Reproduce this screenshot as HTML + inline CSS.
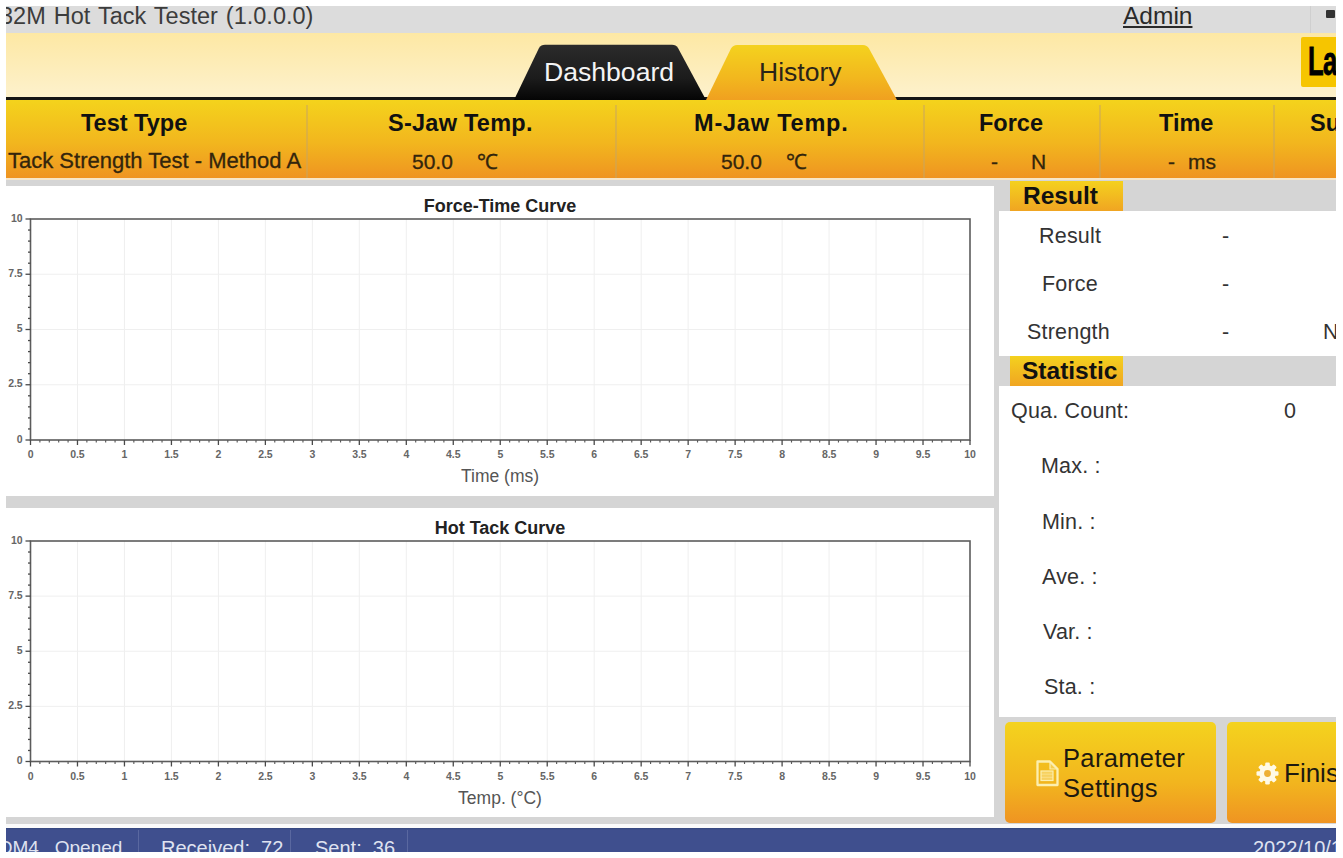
<!DOCTYPE html>
<html><head><meta charset="utf-8">
<style>
html,body{margin:0;padding:0;}
body{width:1343px;height:858px;position:relative;overflow:hidden;background:#fff;font-family:"Liberation Sans",sans-serif;}
#wrap{position:absolute;left:0;top:0;width:1343px;height:858px;clip-path:inset(6px 7px 6px 6px);}
.a{position:absolute;}
.t{position:absolute;white-space:pre;line-height:1;}
.hd{position:absolute;white-space:pre;line-height:1;font-weight:bold;color:#111;font-size:23.5px;}
.vl{position:absolute;white-space:pre;line-height:1;color:#33250c;font-size:21px;-webkit-text-stroke:0.3px #33250c;}
.vl2{font-size:22px;}
.sep{position:absolute;top:105px;width:2px;height:73px;background:rgba(200,165,95,0.5);}
.rl{position:absolute;white-space:pre;line-height:1;color:#333;font-size:21.5px;letter-spacing:0.2px;}
svg text.tk{font-family:"Liberation Sans",sans-serif;font-size:10.5px;font-weight:bold;fill:#666;letter-spacing:-0.1px;}
svg text.ct{font-family:"Liberation Sans",sans-serif;font-size:18px;font-weight:bold;fill:#222;}
svg text.xl{font-family:"Liberation Sans",sans-serif;font-size:17.5px;fill:#555;}
</style></head><body>
<div id="wrap">
  <!-- title bar -->
  <div class="a" style="left:0;top:0;width:1343px;height:33px;background:#dcdcdc;"></div>
  <div class="t" style="left:0px;top:4.5px;font-size:23.5px;color:#3c3c3c;word-spacing:1.5px;">32M Hot Tack Tester (1.0.0.0)</div>
  <div class="t" style="left:1123px;top:4px;font-size:24.5px;color:#2a2a2a;text-decoration:underline;">Admin</div>
  <div class="a" style="left:1310px;top:6px;width:1px;height:27px;background:#cfcfcf;"></div>
  <div class="a" style="left:1326px;top:10px;width:9px;height:8px;background:#333;border-radius:1px;"></div>
  <!-- yellow header -->
  <div class="a" style="left:0;top:33px;width:1343px;height:64px;background:linear-gradient(#fde8a4,#fdf1cc);"></div>
  <!-- logo -->
  <div class="a" style="left:1301px;top:37px;width:42px;height:50px;background:#f6c500;border-radius:2px;"></div>
  <div class="t" style="left:1308px;top:41px;font-size:40px;font-weight:bold;color:#000;transform:scaleX(0.64);transform-origin:left top;letter-spacing:-1px;-webkit-text-stroke:0.8px #000;">La</div>
  <!-- black line -->
  <div class="a" style="left:0;top:97px;width:1343px;height:3px;background:#151515;"></div>
  <!-- tabs -->
  <svg class="a" style="left:500px;top:40px;" width="420" height="62">
    <defs>
      <linearGradient id="gd" x1="0" y1="0" x2="0" y2="1">
        <stop offset="0" stop-color="#2b2b2b"/><stop offset="0.6" stop-color="#1c1c1c"/><stop offset="1" stop-color="#050505"/>
      </linearGradient>
      <linearGradient id="gh" x1="0" y1="0" x2="0" y2="1">
        <stop offset="0" stop-color="#f4d21e"/><stop offset="0.6" stop-color="#f2b71e"/><stop offset="1" stop-color="#f0a020"/>
      </linearGradient>
    </defs>
    <path d="M14 60 L39 8 Q41 4.8 45 4.8 L172 4.8 Q176 4.8 178 8 L206 60 Z" fill="url(#gd)"/>
    <path d="M206 60 L231 8.5 Q233 5 237 5 L363 5 Q367 5 369 8.5 L397 60 Z" fill="url(#gh)"/>
  </svg>
  <div class="t" style="left:544px;top:59px;font-size:26.6px;color:#f4f4f4;">Dashboard</div>
  <div class="t" style="left:759px;top:59px;font-size:26.5px;color:#2a2418;">History</div>
  <!-- orange header -->
  <div class="a" style="left:0;top:100px;width:1343px;height:78px;background:linear-gradient(#f4d31c,#f2b61e 55%,#ef9421);"></div>
    <div class="a" style="left:0;top:178px;width:1343px;height:2px;background:#f7e6c8;"></div>
  <div class="sep" style="left:306px;"></div>
  <div class="sep" style="left:615px;"></div>
  <div class="sep" style="left:923px;"></div>
  <div class="sep" style="left:1099px;"></div>
  <div class="sep" style="left:1273px;"></div>
  <div class="hd" style="left:81px;top:112px;">Test Type</div>
  <div class="vl" style="left:8px;top:150px;font-size:22px;">Tack Strength Test - Method A</div>
  <div class="hd" style="left:388px;top:112px;letter-spacing:0.25px;">S-Jaw Temp.</div>
  <div class="vl" style="left:412px;top:151px;">50.0</div>
  <div class="vl" style="left:477px;top:151px;">&#8451;</div>
  <div class="hd" style="left:694px;top:112px;letter-spacing:0.8px;">M-Jaw Temp.</div>
  <div class="vl" style="left:721px;top:151px;">50.0</div>
  <div class="vl" style="left:786px;top:151px;">&#8451;</div>
  <div class="hd" style="left:979px;top:112px;">Force</div>
  <div class="vl" style="left:991px;top:151px;">-</div>
  <div class="vl" style="left:1031px;top:151px;">N</div>
  <div class="hd" style="left:1159px;top:112px;">Time</div>
  <div class="vl" style="left:1168px;top:151px;">-</div>
  <div class="vl" style="left:1188px;top:151px;">ms</div>
  <div class="hd" style="left:1310px;top:112px;">Su</div>
  <!-- grey background -->
  <div class="a" style="left:0;top:180px;width:1343px;height:648px;background:#d5d5d5;"></div>
  <!-- chart panels -->
  <div class="a" style="left:0;top:186px;width:994px;height:309.5px;background:#fff;"></div>
  <div class="a" style="left:0;top:508px;width:994px;height:308.5px;background:#fff;"></div>
  <svg class="a" style="left:0;top:0;" width="1000" height="858">
<line x1="77.47" y1="219" x2="77.47" y2="440" stroke="#efefef" stroke-width="1"/>
<line x1="124.45" y1="219" x2="124.45" y2="440" stroke="#efefef" stroke-width="1"/>
<line x1="171.43" y1="219" x2="171.43" y2="440" stroke="#efefef" stroke-width="1"/>
<line x1="218.40" y1="219" x2="218.40" y2="440" stroke="#efefef" stroke-width="1"/>
<line x1="265.38" y1="219" x2="265.38" y2="440" stroke="#efefef" stroke-width="1"/>
<line x1="312.35" y1="219" x2="312.35" y2="440" stroke="#efefef" stroke-width="1"/>
<line x1="359.32" y1="219" x2="359.32" y2="440" stroke="#efefef" stroke-width="1"/>
<line x1="406.30" y1="219" x2="406.30" y2="440" stroke="#efefef" stroke-width="1"/>
<line x1="453.27" y1="219" x2="453.27" y2="440" stroke="#efefef" stroke-width="1"/>
<line x1="500.25" y1="219" x2="500.25" y2="440" stroke="#efefef" stroke-width="1"/>
<line x1="547.23" y1="219" x2="547.23" y2="440" stroke="#efefef" stroke-width="1"/>
<line x1="594.20" y1="219" x2="594.20" y2="440" stroke="#efefef" stroke-width="1"/>
<line x1="641.17" y1="219" x2="641.17" y2="440" stroke="#efefef" stroke-width="1"/>
<line x1="688.15" y1="219" x2="688.15" y2="440" stroke="#efefef" stroke-width="1"/>
<line x1="735.12" y1="219" x2="735.12" y2="440" stroke="#efefef" stroke-width="1"/>
<line x1="782.10" y1="219" x2="782.10" y2="440" stroke="#efefef" stroke-width="1"/>
<line x1="829.08" y1="219" x2="829.08" y2="440" stroke="#efefef" stroke-width="1"/>
<line x1="876.05" y1="219" x2="876.05" y2="440" stroke="#efefef" stroke-width="1"/>
<line x1="923.02" y1="219" x2="923.02" y2="440" stroke="#efefef" stroke-width="1"/>
<line x1="30.5" y1="274.25" x2="970.0" y2="274.25" stroke="#efefef" stroke-width="1"/>
<line x1="30.5" y1="329.50" x2="970.0" y2="329.50" stroke="#efefef" stroke-width="1"/>
<line x1="30.5" y1="384.75" x2="970.0" y2="384.75" stroke="#efefef" stroke-width="1"/>
<rect x="30.5" y="219" width="939.5" height="221" fill="none" stroke="#5c5c5c" stroke-width="1.6"/>
<line x1="30.50" y1="440" x2="30.50" y2="445" stroke="#4a4a4a" stroke-width="1.3"/>
<line x1="39.89" y1="440" x2="39.89" y2="442.5" stroke="#5a5a5a" stroke-width="1.15"/>
<line x1="49.29" y1="440" x2="49.29" y2="442.5" stroke="#5a5a5a" stroke-width="1.15"/>
<line x1="58.69" y1="440" x2="58.69" y2="442.5" stroke="#5a5a5a" stroke-width="1.15"/>
<line x1="68.08" y1="440" x2="68.08" y2="442.5" stroke="#5a5a5a" stroke-width="1.15"/>
<line x1="77.47" y1="440" x2="77.47" y2="445" stroke="#4a4a4a" stroke-width="1.3"/>
<line x1="86.87" y1="440" x2="86.87" y2="442.5" stroke="#5a5a5a" stroke-width="1.15"/>
<line x1="96.27" y1="440" x2="96.27" y2="442.5" stroke="#5a5a5a" stroke-width="1.15"/>
<line x1="105.66" y1="440" x2="105.66" y2="442.5" stroke="#5a5a5a" stroke-width="1.15"/>
<line x1="115.06" y1="440" x2="115.06" y2="442.5" stroke="#5a5a5a" stroke-width="1.15"/>
<line x1="124.45" y1="440" x2="124.45" y2="445" stroke="#4a4a4a" stroke-width="1.3"/>
<line x1="133.84" y1="440" x2="133.84" y2="442.5" stroke="#5a5a5a" stroke-width="1.15"/>
<line x1="143.24" y1="440" x2="143.24" y2="442.5" stroke="#5a5a5a" stroke-width="1.15"/>
<line x1="152.63" y1="440" x2="152.63" y2="442.5" stroke="#5a5a5a" stroke-width="1.15"/>
<line x1="162.03" y1="440" x2="162.03" y2="442.5" stroke="#5a5a5a" stroke-width="1.15"/>
<line x1="171.43" y1="440" x2="171.43" y2="445" stroke="#4a4a4a" stroke-width="1.3"/>
<line x1="180.82" y1="440" x2="180.82" y2="442.5" stroke="#5a5a5a" stroke-width="1.15"/>
<line x1="190.22" y1="440" x2="190.22" y2="442.5" stroke="#5a5a5a" stroke-width="1.15"/>
<line x1="199.61" y1="440" x2="199.61" y2="442.5" stroke="#5a5a5a" stroke-width="1.15"/>
<line x1="209.00" y1="440" x2="209.00" y2="442.5" stroke="#5a5a5a" stroke-width="1.15"/>
<line x1="218.40" y1="440" x2="218.40" y2="445" stroke="#4a4a4a" stroke-width="1.3"/>
<line x1="227.79" y1="440" x2="227.79" y2="442.5" stroke="#5a5a5a" stroke-width="1.15"/>
<line x1="237.19" y1="440" x2="237.19" y2="442.5" stroke="#5a5a5a" stroke-width="1.15"/>
<line x1="246.59" y1="440" x2="246.59" y2="442.5" stroke="#5a5a5a" stroke-width="1.15"/>
<line x1="255.98" y1="440" x2="255.98" y2="442.5" stroke="#5a5a5a" stroke-width="1.15"/>
<line x1="265.38" y1="440" x2="265.38" y2="445" stroke="#4a4a4a" stroke-width="1.3"/>
<line x1="274.77" y1="440" x2="274.77" y2="442.5" stroke="#5a5a5a" stroke-width="1.15"/>
<line x1="284.16" y1="440" x2="284.16" y2="442.5" stroke="#5a5a5a" stroke-width="1.15"/>
<line x1="293.56" y1="440" x2="293.56" y2="442.5" stroke="#5a5a5a" stroke-width="1.15"/>
<line x1="302.95" y1="440" x2="302.95" y2="442.5" stroke="#5a5a5a" stroke-width="1.15"/>
<line x1="312.35" y1="440" x2="312.35" y2="445" stroke="#4a4a4a" stroke-width="1.3"/>
<line x1="321.75" y1="440" x2="321.75" y2="442.5" stroke="#5a5a5a" stroke-width="1.15"/>
<line x1="331.14" y1="440" x2="331.14" y2="442.5" stroke="#5a5a5a" stroke-width="1.15"/>
<line x1="340.54" y1="440" x2="340.54" y2="442.5" stroke="#5a5a5a" stroke-width="1.15"/>
<line x1="349.93" y1="440" x2="349.93" y2="442.5" stroke="#5a5a5a" stroke-width="1.15"/>
<line x1="359.32" y1="440" x2="359.32" y2="445" stroke="#4a4a4a" stroke-width="1.3"/>
<line x1="368.72" y1="440" x2="368.72" y2="442.5" stroke="#5a5a5a" stroke-width="1.15"/>
<line x1="378.12" y1="440" x2="378.12" y2="442.5" stroke="#5a5a5a" stroke-width="1.15"/>
<line x1="387.51" y1="440" x2="387.51" y2="442.5" stroke="#5a5a5a" stroke-width="1.15"/>
<line x1="396.90" y1="440" x2="396.90" y2="442.5" stroke="#5a5a5a" stroke-width="1.15"/>
<line x1="406.30" y1="440" x2="406.30" y2="445" stroke="#4a4a4a" stroke-width="1.3"/>
<line x1="415.69" y1="440" x2="415.69" y2="442.5" stroke="#5a5a5a" stroke-width="1.15"/>
<line x1="425.09" y1="440" x2="425.09" y2="442.5" stroke="#5a5a5a" stroke-width="1.15"/>
<line x1="434.49" y1="440" x2="434.49" y2="442.5" stroke="#5a5a5a" stroke-width="1.15"/>
<line x1="443.88" y1="440" x2="443.88" y2="442.5" stroke="#5a5a5a" stroke-width="1.15"/>
<line x1="453.27" y1="440" x2="453.27" y2="445" stroke="#4a4a4a" stroke-width="1.3"/>
<line x1="462.67" y1="440" x2="462.67" y2="442.5" stroke="#5a5a5a" stroke-width="1.15"/>
<line x1="472.06" y1="440" x2="472.06" y2="442.5" stroke="#5a5a5a" stroke-width="1.15"/>
<line x1="481.46" y1="440" x2="481.46" y2="442.5" stroke="#5a5a5a" stroke-width="1.15"/>
<line x1="490.86" y1="440" x2="490.86" y2="442.5" stroke="#5a5a5a" stroke-width="1.15"/>
<line x1="500.25" y1="440" x2="500.25" y2="445" stroke="#4a4a4a" stroke-width="1.3"/>
<line x1="509.64" y1="440" x2="509.64" y2="442.5" stroke="#5a5a5a" stroke-width="1.15"/>
<line x1="519.04" y1="440" x2="519.04" y2="442.5" stroke="#5a5a5a" stroke-width="1.15"/>
<line x1="528.43" y1="440" x2="528.43" y2="442.5" stroke="#5a5a5a" stroke-width="1.15"/>
<line x1="537.83" y1="440" x2="537.83" y2="442.5" stroke="#5a5a5a" stroke-width="1.15"/>
<line x1="547.23" y1="440" x2="547.23" y2="445" stroke="#4a4a4a" stroke-width="1.3"/>
<line x1="556.62" y1="440" x2="556.62" y2="442.5" stroke="#5a5a5a" stroke-width="1.15"/>
<line x1="566.01" y1="440" x2="566.01" y2="442.5" stroke="#5a5a5a" stroke-width="1.15"/>
<line x1="575.41" y1="440" x2="575.41" y2="442.5" stroke="#5a5a5a" stroke-width="1.15"/>
<line x1="584.80" y1="440" x2="584.80" y2="442.5" stroke="#5a5a5a" stroke-width="1.15"/>
<line x1="594.20" y1="440" x2="594.20" y2="445" stroke="#4a4a4a" stroke-width="1.3"/>
<line x1="603.60" y1="440" x2="603.60" y2="442.5" stroke="#5a5a5a" stroke-width="1.15"/>
<line x1="612.99" y1="440" x2="612.99" y2="442.5" stroke="#5a5a5a" stroke-width="1.15"/>
<line x1="622.38" y1="440" x2="622.38" y2="442.5" stroke="#5a5a5a" stroke-width="1.15"/>
<line x1="631.78" y1="440" x2="631.78" y2="442.5" stroke="#5a5a5a" stroke-width="1.15"/>
<line x1="641.17" y1="440" x2="641.17" y2="445" stroke="#4a4a4a" stroke-width="1.3"/>
<line x1="650.57" y1="440" x2="650.57" y2="442.5" stroke="#5a5a5a" stroke-width="1.15"/>
<line x1="659.97" y1="440" x2="659.97" y2="442.5" stroke="#5a5a5a" stroke-width="1.15"/>
<line x1="669.36" y1="440" x2="669.36" y2="442.5" stroke="#5a5a5a" stroke-width="1.15"/>
<line x1="678.75" y1="440" x2="678.75" y2="442.5" stroke="#5a5a5a" stroke-width="1.15"/>
<line x1="688.15" y1="440" x2="688.15" y2="445" stroke="#4a4a4a" stroke-width="1.3"/>
<line x1="697.54" y1="440" x2="697.54" y2="442.5" stroke="#5a5a5a" stroke-width="1.15"/>
<line x1="706.94" y1="440" x2="706.94" y2="442.5" stroke="#5a5a5a" stroke-width="1.15"/>
<line x1="716.34" y1="440" x2="716.34" y2="442.5" stroke="#5a5a5a" stroke-width="1.15"/>
<line x1="725.73" y1="440" x2="725.73" y2="442.5" stroke="#5a5a5a" stroke-width="1.15"/>
<line x1="735.12" y1="440" x2="735.12" y2="445" stroke="#4a4a4a" stroke-width="1.3"/>
<line x1="744.52" y1="440" x2="744.52" y2="442.5" stroke="#5a5a5a" stroke-width="1.15"/>
<line x1="753.91" y1="440" x2="753.91" y2="442.5" stroke="#5a5a5a" stroke-width="1.15"/>
<line x1="763.31" y1="440" x2="763.31" y2="442.5" stroke="#5a5a5a" stroke-width="1.15"/>
<line x1="772.71" y1="440" x2="772.71" y2="442.5" stroke="#5a5a5a" stroke-width="1.15"/>
<line x1="782.10" y1="440" x2="782.10" y2="445" stroke="#4a4a4a" stroke-width="1.3"/>
<line x1="791.50" y1="440" x2="791.50" y2="442.5" stroke="#5a5a5a" stroke-width="1.15"/>
<line x1="800.89" y1="440" x2="800.89" y2="442.5" stroke="#5a5a5a" stroke-width="1.15"/>
<line x1="810.28" y1="440" x2="810.28" y2="442.5" stroke="#5a5a5a" stroke-width="1.15"/>
<line x1="819.68" y1="440" x2="819.68" y2="442.5" stroke="#5a5a5a" stroke-width="1.15"/>
<line x1="829.08" y1="440" x2="829.08" y2="445" stroke="#4a4a4a" stroke-width="1.3"/>
<line x1="838.47" y1="440" x2="838.47" y2="442.5" stroke="#5a5a5a" stroke-width="1.15"/>
<line x1="847.87" y1="440" x2="847.87" y2="442.5" stroke="#5a5a5a" stroke-width="1.15"/>
<line x1="857.26" y1="440" x2="857.26" y2="442.5" stroke="#5a5a5a" stroke-width="1.15"/>
<line x1="866.65" y1="440" x2="866.65" y2="442.5" stroke="#5a5a5a" stroke-width="1.15"/>
<line x1="876.05" y1="440" x2="876.05" y2="445" stroke="#4a4a4a" stroke-width="1.3"/>
<line x1="885.45" y1="440" x2="885.45" y2="442.5" stroke="#5a5a5a" stroke-width="1.15"/>
<line x1="894.84" y1="440" x2="894.84" y2="442.5" stroke="#5a5a5a" stroke-width="1.15"/>
<line x1="904.24" y1="440" x2="904.24" y2="442.5" stroke="#5a5a5a" stroke-width="1.15"/>
<line x1="913.63" y1="440" x2="913.63" y2="442.5" stroke="#5a5a5a" stroke-width="1.15"/>
<line x1="923.02" y1="440" x2="923.02" y2="445" stroke="#4a4a4a" stroke-width="1.3"/>
<line x1="932.42" y1="440" x2="932.42" y2="442.5" stroke="#5a5a5a" stroke-width="1.15"/>
<line x1="941.82" y1="440" x2="941.82" y2="442.5" stroke="#5a5a5a" stroke-width="1.15"/>
<line x1="951.21" y1="440" x2="951.21" y2="442.5" stroke="#5a5a5a" stroke-width="1.15"/>
<line x1="960.61" y1="440" x2="960.61" y2="442.5" stroke="#5a5a5a" stroke-width="1.15"/>
<line x1="970.00" y1="440" x2="970.00" y2="445" stroke="#4a4a4a" stroke-width="1.3"/>
<line x1="25.5" y1="219.00" x2="30.5" y2="219.00" stroke="#4a4a4a" stroke-width="1.3"/>
<line x1="28.0" y1="230.05" x2="30.5" y2="230.05" stroke="#4a4a4a" stroke-width="1.3"/>
<line x1="28.0" y1="241.10" x2="30.5" y2="241.10" stroke="#4a4a4a" stroke-width="1.3"/>
<line x1="28.0" y1="252.15" x2="30.5" y2="252.15" stroke="#4a4a4a" stroke-width="1.3"/>
<line x1="28.0" y1="263.20" x2="30.5" y2="263.20" stroke="#4a4a4a" stroke-width="1.3"/>
<line x1="25.5" y1="274.25" x2="30.5" y2="274.25" stroke="#4a4a4a" stroke-width="1.3"/>
<line x1="28.0" y1="285.30" x2="30.5" y2="285.30" stroke="#4a4a4a" stroke-width="1.3"/>
<line x1="28.0" y1="296.35" x2="30.5" y2="296.35" stroke="#4a4a4a" stroke-width="1.3"/>
<line x1="28.0" y1="307.40" x2="30.5" y2="307.40" stroke="#4a4a4a" stroke-width="1.3"/>
<line x1="28.0" y1="318.45" x2="30.5" y2="318.45" stroke="#4a4a4a" stroke-width="1.3"/>
<line x1="25.5" y1="329.50" x2="30.5" y2="329.50" stroke="#4a4a4a" stroke-width="1.3"/>
<line x1="28.0" y1="340.55" x2="30.5" y2="340.55" stroke="#4a4a4a" stroke-width="1.3"/>
<line x1="28.0" y1="351.60" x2="30.5" y2="351.60" stroke="#4a4a4a" stroke-width="1.3"/>
<line x1="28.0" y1="362.65" x2="30.5" y2="362.65" stroke="#4a4a4a" stroke-width="1.3"/>
<line x1="28.0" y1="373.70" x2="30.5" y2="373.70" stroke="#4a4a4a" stroke-width="1.3"/>
<line x1="25.5" y1="384.75" x2="30.5" y2="384.75" stroke="#4a4a4a" stroke-width="1.3"/>
<line x1="28.0" y1="395.80" x2="30.5" y2="395.80" stroke="#4a4a4a" stroke-width="1.3"/>
<line x1="28.0" y1="406.85" x2="30.5" y2="406.85" stroke="#4a4a4a" stroke-width="1.3"/>
<line x1="28.0" y1="417.90" x2="30.5" y2="417.90" stroke="#4a4a4a" stroke-width="1.3"/>
<line x1="28.0" y1="428.95" x2="30.5" y2="428.95" stroke="#4a4a4a" stroke-width="1.3"/>
<line x1="25.5" y1="440.00" x2="30.5" y2="440.00" stroke="#4a4a4a" stroke-width="1.3"/>
<text x="30.50" y="458" text-anchor="middle" class="tk">0</text>
<text x="77.47" y="458" text-anchor="middle" class="tk">0.5</text>
<text x="124.45" y="458" text-anchor="middle" class="tk">1</text>
<text x="171.43" y="458" text-anchor="middle" class="tk">1.5</text>
<text x="218.40" y="458" text-anchor="middle" class="tk">2</text>
<text x="265.38" y="458" text-anchor="middle" class="tk">2.5</text>
<text x="312.35" y="458" text-anchor="middle" class="tk">3</text>
<text x="359.32" y="458" text-anchor="middle" class="tk">3.5</text>
<text x="406.30" y="458" text-anchor="middle" class="tk">4</text>
<text x="453.27" y="458" text-anchor="middle" class="tk">4.5</text>
<text x="500.25" y="458" text-anchor="middle" class="tk">5</text>
<text x="547.23" y="458" text-anchor="middle" class="tk">5.5</text>
<text x="594.20" y="458" text-anchor="middle" class="tk">6</text>
<text x="641.17" y="458" text-anchor="middle" class="tk">6.5</text>
<text x="688.15" y="458" text-anchor="middle" class="tk">7</text>
<text x="735.12" y="458" text-anchor="middle" class="tk">7.5</text>
<text x="782.10" y="458" text-anchor="middle" class="tk">8</text>
<text x="829.08" y="458" text-anchor="middle" class="tk">8.5</text>
<text x="876.05" y="458" text-anchor="middle" class="tk">9</text>
<text x="923.02" y="458" text-anchor="middle" class="tk">9.5</text>
<text x="970.00" y="458" text-anchor="middle" class="tk">10</text>
<text x="22.5" y="221.50" text-anchor="end" class="tk">10</text>
<text x="22.5" y="276.75" text-anchor="end" class="tk">7.5</text>
<text x="22.5" y="332.00" text-anchor="end" class="tk">5</text>
<text x="22.5" y="387.25" text-anchor="end" class="tk">2.5</text>
<text x="22.5" y="442.50" text-anchor="end" class="tk">0</text>
<text x="500" y="211.6" text-anchor="middle" class="ct">Force-Time Curve</text>
<text x="500" y="482" text-anchor="middle" class="xl">Time (ms)</text>
<line x1="77.47" y1="541" x2="77.47" y2="761.5" stroke="#efefef" stroke-width="1"/>
<line x1="124.45" y1="541" x2="124.45" y2="761.5" stroke="#efefef" stroke-width="1"/>
<line x1="171.43" y1="541" x2="171.43" y2="761.5" stroke="#efefef" stroke-width="1"/>
<line x1="218.40" y1="541" x2="218.40" y2="761.5" stroke="#efefef" stroke-width="1"/>
<line x1="265.38" y1="541" x2="265.38" y2="761.5" stroke="#efefef" stroke-width="1"/>
<line x1="312.35" y1="541" x2="312.35" y2="761.5" stroke="#efefef" stroke-width="1"/>
<line x1="359.32" y1="541" x2="359.32" y2="761.5" stroke="#efefef" stroke-width="1"/>
<line x1="406.30" y1="541" x2="406.30" y2="761.5" stroke="#efefef" stroke-width="1"/>
<line x1="453.27" y1="541" x2="453.27" y2="761.5" stroke="#efefef" stroke-width="1"/>
<line x1="500.25" y1="541" x2="500.25" y2="761.5" stroke="#efefef" stroke-width="1"/>
<line x1="547.23" y1="541" x2="547.23" y2="761.5" stroke="#efefef" stroke-width="1"/>
<line x1="594.20" y1="541" x2="594.20" y2="761.5" stroke="#efefef" stroke-width="1"/>
<line x1="641.17" y1="541" x2="641.17" y2="761.5" stroke="#efefef" stroke-width="1"/>
<line x1="688.15" y1="541" x2="688.15" y2="761.5" stroke="#efefef" stroke-width="1"/>
<line x1="735.12" y1="541" x2="735.12" y2="761.5" stroke="#efefef" stroke-width="1"/>
<line x1="782.10" y1="541" x2="782.10" y2="761.5" stroke="#efefef" stroke-width="1"/>
<line x1="829.08" y1="541" x2="829.08" y2="761.5" stroke="#efefef" stroke-width="1"/>
<line x1="876.05" y1="541" x2="876.05" y2="761.5" stroke="#efefef" stroke-width="1"/>
<line x1="923.02" y1="541" x2="923.02" y2="761.5" stroke="#efefef" stroke-width="1"/>
<line x1="30.5" y1="596.12" x2="970.0" y2="596.12" stroke="#efefef" stroke-width="1"/>
<line x1="30.5" y1="651.25" x2="970.0" y2="651.25" stroke="#efefef" stroke-width="1"/>
<line x1="30.5" y1="706.38" x2="970.0" y2="706.38" stroke="#efefef" stroke-width="1"/>
<rect x="30.5" y="541" width="939.5" height="220.5" fill="none" stroke="#5c5c5c" stroke-width="1.6"/>
<line x1="30.50" y1="761.5" x2="30.50" y2="766.5" stroke="#4a4a4a" stroke-width="1.3"/>
<line x1="39.89" y1="761.5" x2="39.89" y2="764.0" stroke="#5a5a5a" stroke-width="1.15"/>
<line x1="49.29" y1="761.5" x2="49.29" y2="764.0" stroke="#5a5a5a" stroke-width="1.15"/>
<line x1="58.69" y1="761.5" x2="58.69" y2="764.0" stroke="#5a5a5a" stroke-width="1.15"/>
<line x1="68.08" y1="761.5" x2="68.08" y2="764.0" stroke="#5a5a5a" stroke-width="1.15"/>
<line x1="77.47" y1="761.5" x2="77.47" y2="766.5" stroke="#4a4a4a" stroke-width="1.3"/>
<line x1="86.87" y1="761.5" x2="86.87" y2="764.0" stroke="#5a5a5a" stroke-width="1.15"/>
<line x1="96.27" y1="761.5" x2="96.27" y2="764.0" stroke="#5a5a5a" stroke-width="1.15"/>
<line x1="105.66" y1="761.5" x2="105.66" y2="764.0" stroke="#5a5a5a" stroke-width="1.15"/>
<line x1="115.06" y1="761.5" x2="115.06" y2="764.0" stroke="#5a5a5a" stroke-width="1.15"/>
<line x1="124.45" y1="761.5" x2="124.45" y2="766.5" stroke="#4a4a4a" stroke-width="1.3"/>
<line x1="133.84" y1="761.5" x2="133.84" y2="764.0" stroke="#5a5a5a" stroke-width="1.15"/>
<line x1="143.24" y1="761.5" x2="143.24" y2="764.0" stroke="#5a5a5a" stroke-width="1.15"/>
<line x1="152.63" y1="761.5" x2="152.63" y2="764.0" stroke="#5a5a5a" stroke-width="1.15"/>
<line x1="162.03" y1="761.5" x2="162.03" y2="764.0" stroke="#5a5a5a" stroke-width="1.15"/>
<line x1="171.43" y1="761.5" x2="171.43" y2="766.5" stroke="#4a4a4a" stroke-width="1.3"/>
<line x1="180.82" y1="761.5" x2="180.82" y2="764.0" stroke="#5a5a5a" stroke-width="1.15"/>
<line x1="190.22" y1="761.5" x2="190.22" y2="764.0" stroke="#5a5a5a" stroke-width="1.15"/>
<line x1="199.61" y1="761.5" x2="199.61" y2="764.0" stroke="#5a5a5a" stroke-width="1.15"/>
<line x1="209.00" y1="761.5" x2="209.00" y2="764.0" stroke="#5a5a5a" stroke-width="1.15"/>
<line x1="218.40" y1="761.5" x2="218.40" y2="766.5" stroke="#4a4a4a" stroke-width="1.3"/>
<line x1="227.79" y1="761.5" x2="227.79" y2="764.0" stroke="#5a5a5a" stroke-width="1.15"/>
<line x1="237.19" y1="761.5" x2="237.19" y2="764.0" stroke="#5a5a5a" stroke-width="1.15"/>
<line x1="246.59" y1="761.5" x2="246.59" y2="764.0" stroke="#5a5a5a" stroke-width="1.15"/>
<line x1="255.98" y1="761.5" x2="255.98" y2="764.0" stroke="#5a5a5a" stroke-width="1.15"/>
<line x1="265.38" y1="761.5" x2="265.38" y2="766.5" stroke="#4a4a4a" stroke-width="1.3"/>
<line x1="274.77" y1="761.5" x2="274.77" y2="764.0" stroke="#5a5a5a" stroke-width="1.15"/>
<line x1="284.16" y1="761.5" x2="284.16" y2="764.0" stroke="#5a5a5a" stroke-width="1.15"/>
<line x1="293.56" y1="761.5" x2="293.56" y2="764.0" stroke="#5a5a5a" stroke-width="1.15"/>
<line x1="302.95" y1="761.5" x2="302.95" y2="764.0" stroke="#5a5a5a" stroke-width="1.15"/>
<line x1="312.35" y1="761.5" x2="312.35" y2="766.5" stroke="#4a4a4a" stroke-width="1.3"/>
<line x1="321.75" y1="761.5" x2="321.75" y2="764.0" stroke="#5a5a5a" stroke-width="1.15"/>
<line x1="331.14" y1="761.5" x2="331.14" y2="764.0" stroke="#5a5a5a" stroke-width="1.15"/>
<line x1="340.54" y1="761.5" x2="340.54" y2="764.0" stroke="#5a5a5a" stroke-width="1.15"/>
<line x1="349.93" y1="761.5" x2="349.93" y2="764.0" stroke="#5a5a5a" stroke-width="1.15"/>
<line x1="359.32" y1="761.5" x2="359.32" y2="766.5" stroke="#4a4a4a" stroke-width="1.3"/>
<line x1="368.72" y1="761.5" x2="368.72" y2="764.0" stroke="#5a5a5a" stroke-width="1.15"/>
<line x1="378.12" y1="761.5" x2="378.12" y2="764.0" stroke="#5a5a5a" stroke-width="1.15"/>
<line x1="387.51" y1="761.5" x2="387.51" y2="764.0" stroke="#5a5a5a" stroke-width="1.15"/>
<line x1="396.90" y1="761.5" x2="396.90" y2="764.0" stroke="#5a5a5a" stroke-width="1.15"/>
<line x1="406.30" y1="761.5" x2="406.30" y2="766.5" stroke="#4a4a4a" stroke-width="1.3"/>
<line x1="415.69" y1="761.5" x2="415.69" y2="764.0" stroke="#5a5a5a" stroke-width="1.15"/>
<line x1="425.09" y1="761.5" x2="425.09" y2="764.0" stroke="#5a5a5a" stroke-width="1.15"/>
<line x1="434.49" y1="761.5" x2="434.49" y2="764.0" stroke="#5a5a5a" stroke-width="1.15"/>
<line x1="443.88" y1="761.5" x2="443.88" y2="764.0" stroke="#5a5a5a" stroke-width="1.15"/>
<line x1="453.27" y1="761.5" x2="453.27" y2="766.5" stroke="#4a4a4a" stroke-width="1.3"/>
<line x1="462.67" y1="761.5" x2="462.67" y2="764.0" stroke="#5a5a5a" stroke-width="1.15"/>
<line x1="472.06" y1="761.5" x2="472.06" y2="764.0" stroke="#5a5a5a" stroke-width="1.15"/>
<line x1="481.46" y1="761.5" x2="481.46" y2="764.0" stroke="#5a5a5a" stroke-width="1.15"/>
<line x1="490.86" y1="761.5" x2="490.86" y2="764.0" stroke="#5a5a5a" stroke-width="1.15"/>
<line x1="500.25" y1="761.5" x2="500.25" y2="766.5" stroke="#4a4a4a" stroke-width="1.3"/>
<line x1="509.64" y1="761.5" x2="509.64" y2="764.0" stroke="#5a5a5a" stroke-width="1.15"/>
<line x1="519.04" y1="761.5" x2="519.04" y2="764.0" stroke="#5a5a5a" stroke-width="1.15"/>
<line x1="528.43" y1="761.5" x2="528.43" y2="764.0" stroke="#5a5a5a" stroke-width="1.15"/>
<line x1="537.83" y1="761.5" x2="537.83" y2="764.0" stroke="#5a5a5a" stroke-width="1.15"/>
<line x1="547.23" y1="761.5" x2="547.23" y2="766.5" stroke="#4a4a4a" stroke-width="1.3"/>
<line x1="556.62" y1="761.5" x2="556.62" y2="764.0" stroke="#5a5a5a" stroke-width="1.15"/>
<line x1="566.01" y1="761.5" x2="566.01" y2="764.0" stroke="#5a5a5a" stroke-width="1.15"/>
<line x1="575.41" y1="761.5" x2="575.41" y2="764.0" stroke="#5a5a5a" stroke-width="1.15"/>
<line x1="584.80" y1="761.5" x2="584.80" y2="764.0" stroke="#5a5a5a" stroke-width="1.15"/>
<line x1="594.20" y1="761.5" x2="594.20" y2="766.5" stroke="#4a4a4a" stroke-width="1.3"/>
<line x1="603.60" y1="761.5" x2="603.60" y2="764.0" stroke="#5a5a5a" stroke-width="1.15"/>
<line x1="612.99" y1="761.5" x2="612.99" y2="764.0" stroke="#5a5a5a" stroke-width="1.15"/>
<line x1="622.38" y1="761.5" x2="622.38" y2="764.0" stroke="#5a5a5a" stroke-width="1.15"/>
<line x1="631.78" y1="761.5" x2="631.78" y2="764.0" stroke="#5a5a5a" stroke-width="1.15"/>
<line x1="641.17" y1="761.5" x2="641.17" y2="766.5" stroke="#4a4a4a" stroke-width="1.3"/>
<line x1="650.57" y1="761.5" x2="650.57" y2="764.0" stroke="#5a5a5a" stroke-width="1.15"/>
<line x1="659.97" y1="761.5" x2="659.97" y2="764.0" stroke="#5a5a5a" stroke-width="1.15"/>
<line x1="669.36" y1="761.5" x2="669.36" y2="764.0" stroke="#5a5a5a" stroke-width="1.15"/>
<line x1="678.75" y1="761.5" x2="678.75" y2="764.0" stroke="#5a5a5a" stroke-width="1.15"/>
<line x1="688.15" y1="761.5" x2="688.15" y2="766.5" stroke="#4a4a4a" stroke-width="1.3"/>
<line x1="697.54" y1="761.5" x2="697.54" y2="764.0" stroke="#5a5a5a" stroke-width="1.15"/>
<line x1="706.94" y1="761.5" x2="706.94" y2="764.0" stroke="#5a5a5a" stroke-width="1.15"/>
<line x1="716.34" y1="761.5" x2="716.34" y2="764.0" stroke="#5a5a5a" stroke-width="1.15"/>
<line x1="725.73" y1="761.5" x2="725.73" y2="764.0" stroke="#5a5a5a" stroke-width="1.15"/>
<line x1="735.12" y1="761.5" x2="735.12" y2="766.5" stroke="#4a4a4a" stroke-width="1.3"/>
<line x1="744.52" y1="761.5" x2="744.52" y2="764.0" stroke="#5a5a5a" stroke-width="1.15"/>
<line x1="753.91" y1="761.5" x2="753.91" y2="764.0" stroke="#5a5a5a" stroke-width="1.15"/>
<line x1="763.31" y1="761.5" x2="763.31" y2="764.0" stroke="#5a5a5a" stroke-width="1.15"/>
<line x1="772.71" y1="761.5" x2="772.71" y2="764.0" stroke="#5a5a5a" stroke-width="1.15"/>
<line x1="782.10" y1="761.5" x2="782.10" y2="766.5" stroke="#4a4a4a" stroke-width="1.3"/>
<line x1="791.50" y1="761.5" x2="791.50" y2="764.0" stroke="#5a5a5a" stroke-width="1.15"/>
<line x1="800.89" y1="761.5" x2="800.89" y2="764.0" stroke="#5a5a5a" stroke-width="1.15"/>
<line x1="810.28" y1="761.5" x2="810.28" y2="764.0" stroke="#5a5a5a" stroke-width="1.15"/>
<line x1="819.68" y1="761.5" x2="819.68" y2="764.0" stroke="#5a5a5a" stroke-width="1.15"/>
<line x1="829.08" y1="761.5" x2="829.08" y2="766.5" stroke="#4a4a4a" stroke-width="1.3"/>
<line x1="838.47" y1="761.5" x2="838.47" y2="764.0" stroke="#5a5a5a" stroke-width="1.15"/>
<line x1="847.87" y1="761.5" x2="847.87" y2="764.0" stroke="#5a5a5a" stroke-width="1.15"/>
<line x1="857.26" y1="761.5" x2="857.26" y2="764.0" stroke="#5a5a5a" stroke-width="1.15"/>
<line x1="866.65" y1="761.5" x2="866.65" y2="764.0" stroke="#5a5a5a" stroke-width="1.15"/>
<line x1="876.05" y1="761.5" x2="876.05" y2="766.5" stroke="#4a4a4a" stroke-width="1.3"/>
<line x1="885.45" y1="761.5" x2="885.45" y2="764.0" stroke="#5a5a5a" stroke-width="1.15"/>
<line x1="894.84" y1="761.5" x2="894.84" y2="764.0" stroke="#5a5a5a" stroke-width="1.15"/>
<line x1="904.24" y1="761.5" x2="904.24" y2="764.0" stroke="#5a5a5a" stroke-width="1.15"/>
<line x1="913.63" y1="761.5" x2="913.63" y2="764.0" stroke="#5a5a5a" stroke-width="1.15"/>
<line x1="923.02" y1="761.5" x2="923.02" y2="766.5" stroke="#4a4a4a" stroke-width="1.3"/>
<line x1="932.42" y1="761.5" x2="932.42" y2="764.0" stroke="#5a5a5a" stroke-width="1.15"/>
<line x1="941.82" y1="761.5" x2="941.82" y2="764.0" stroke="#5a5a5a" stroke-width="1.15"/>
<line x1="951.21" y1="761.5" x2="951.21" y2="764.0" stroke="#5a5a5a" stroke-width="1.15"/>
<line x1="960.61" y1="761.5" x2="960.61" y2="764.0" stroke="#5a5a5a" stroke-width="1.15"/>
<line x1="970.00" y1="761.5" x2="970.00" y2="766.5" stroke="#4a4a4a" stroke-width="1.3"/>
<line x1="25.5" y1="541.00" x2="30.5" y2="541.00" stroke="#4a4a4a" stroke-width="1.3"/>
<line x1="28.0" y1="552.02" x2="30.5" y2="552.02" stroke="#4a4a4a" stroke-width="1.3"/>
<line x1="28.0" y1="563.05" x2="30.5" y2="563.05" stroke="#4a4a4a" stroke-width="1.3"/>
<line x1="28.0" y1="574.08" x2="30.5" y2="574.08" stroke="#4a4a4a" stroke-width="1.3"/>
<line x1="28.0" y1="585.10" x2="30.5" y2="585.10" stroke="#4a4a4a" stroke-width="1.3"/>
<line x1="25.5" y1="596.12" x2="30.5" y2="596.12" stroke="#4a4a4a" stroke-width="1.3"/>
<line x1="28.0" y1="607.15" x2="30.5" y2="607.15" stroke="#4a4a4a" stroke-width="1.3"/>
<line x1="28.0" y1="618.17" x2="30.5" y2="618.17" stroke="#4a4a4a" stroke-width="1.3"/>
<line x1="28.0" y1="629.20" x2="30.5" y2="629.20" stroke="#4a4a4a" stroke-width="1.3"/>
<line x1="28.0" y1="640.23" x2="30.5" y2="640.23" stroke="#4a4a4a" stroke-width="1.3"/>
<line x1="25.5" y1="651.25" x2="30.5" y2="651.25" stroke="#4a4a4a" stroke-width="1.3"/>
<line x1="28.0" y1="662.27" x2="30.5" y2="662.27" stroke="#4a4a4a" stroke-width="1.3"/>
<line x1="28.0" y1="673.30" x2="30.5" y2="673.30" stroke="#4a4a4a" stroke-width="1.3"/>
<line x1="28.0" y1="684.33" x2="30.5" y2="684.33" stroke="#4a4a4a" stroke-width="1.3"/>
<line x1="28.0" y1="695.35" x2="30.5" y2="695.35" stroke="#4a4a4a" stroke-width="1.3"/>
<line x1="25.5" y1="706.38" x2="30.5" y2="706.38" stroke="#4a4a4a" stroke-width="1.3"/>
<line x1="28.0" y1="717.40" x2="30.5" y2="717.40" stroke="#4a4a4a" stroke-width="1.3"/>
<line x1="28.0" y1="728.42" x2="30.5" y2="728.42" stroke="#4a4a4a" stroke-width="1.3"/>
<line x1="28.0" y1="739.45" x2="30.5" y2="739.45" stroke="#4a4a4a" stroke-width="1.3"/>
<line x1="28.0" y1="750.48" x2="30.5" y2="750.48" stroke="#4a4a4a" stroke-width="1.3"/>
<line x1="25.5" y1="761.50" x2="30.5" y2="761.50" stroke="#4a4a4a" stroke-width="1.3"/>
<text x="30.50" y="780" text-anchor="middle" class="tk">0</text>
<text x="77.47" y="780" text-anchor="middle" class="tk">0.5</text>
<text x="124.45" y="780" text-anchor="middle" class="tk">1</text>
<text x="171.43" y="780" text-anchor="middle" class="tk">1.5</text>
<text x="218.40" y="780" text-anchor="middle" class="tk">2</text>
<text x="265.38" y="780" text-anchor="middle" class="tk">2.5</text>
<text x="312.35" y="780" text-anchor="middle" class="tk">3</text>
<text x="359.32" y="780" text-anchor="middle" class="tk">3.5</text>
<text x="406.30" y="780" text-anchor="middle" class="tk">4</text>
<text x="453.27" y="780" text-anchor="middle" class="tk">4.5</text>
<text x="500.25" y="780" text-anchor="middle" class="tk">5</text>
<text x="547.23" y="780" text-anchor="middle" class="tk">5.5</text>
<text x="594.20" y="780" text-anchor="middle" class="tk">6</text>
<text x="641.17" y="780" text-anchor="middle" class="tk">6.5</text>
<text x="688.15" y="780" text-anchor="middle" class="tk">7</text>
<text x="735.12" y="780" text-anchor="middle" class="tk">7.5</text>
<text x="782.10" y="780" text-anchor="middle" class="tk">8</text>
<text x="829.08" y="780" text-anchor="middle" class="tk">8.5</text>
<text x="876.05" y="780" text-anchor="middle" class="tk">9</text>
<text x="923.02" y="780" text-anchor="middle" class="tk">9.5</text>
<text x="970.00" y="780" text-anchor="middle" class="tk">10</text>
<text x="22.5" y="543.50" text-anchor="end" class="tk">10</text>
<text x="22.5" y="598.62" text-anchor="end" class="tk">7.5</text>
<text x="22.5" y="653.75" text-anchor="end" class="tk">5</text>
<text x="22.5" y="708.88" text-anchor="end" class="tk">2.5</text>
<text x="22.5" y="764.00" text-anchor="end" class="tk">0</text>
<text x="500" y="533.8" text-anchor="middle" class="ct">Hot Tack Curve</text>
<text x="500" y="804.3" text-anchor="middle" class="xl">Temp. (&#176;C)</text>
  </svg>
  <!-- right panel -->
  <div class="a" style="left:999px;top:211px;width:344px;height:506px;background:#fff;"></div>
  <div class="a" style="left:999px;top:356px;width:344px;height:30px;background:#d5d5d5;"></div>
  <div class="a" style="left:1010px;top:181px;width:113px;height:30px;background:linear-gradient(#f4d11e,#f0a522);"></div>
  <div class="t" style="left:1023px;top:184px;font-size:24.5px;font-weight:bold;color:#111;">Result</div>
  <div class="a" style="left:1010px;top:356px;width:113px;height:30px;background:linear-gradient(#f4d11e,#f0a522);"></div>
  <div class="t" style="left:1022px;top:359px;font-size:24.5px;font-weight:bold;color:#111;">Statistic</div>
  <div class="rl" style="left:1039px;top:225.5px;">Result</div>
  <div class="rl" style="left:1222px;top:225.5px;">-</div>
  <div class="rl" style="left:1042px;top:273.5px;">Force</div>
  <div class="rl" style="left:1222px;top:273.5px;">-</div>
  <div class="rl" style="left:1027px;top:321.5px;">Strength</div>
  <div class="rl" style="left:1222px;top:321.5px;">-</div>
  <div class="rl" style="left:1323px;top:321.5px;">N</div>
  <div class="rl" style="left:1011px;top:400.5px;">Qua. Count:</div>
  <div class="rl" style="left:1284px;top:400.5px;">0</div>
  <div class="rl" style="left:1041px;top:455.5px;">Max. :</div>
  <div class="rl" style="left:1042px;top:511.5px;">Min. :</div>
  <div class="rl" style="left:1042px;top:566.5px;">Ave. :</div>
  <div class="rl" style="left:1043px;top:621.5px;">Var. :</div>
  <div class="rl" style="left:1044px;top:676.5px;">Sta. :</div>
  <!-- buttons -->
  <div class="a" style="left:1005px;top:722px;width:211px;height:101px;border-radius:5px;background:linear-gradient(#f4d31e,#f2b51e 60%,#ef9422);"></div>
  <div class="a" style="left:1227px;top:722px;width:130px;height:101px;border-radius:5px;background:linear-gradient(#f4d31e,#f2b51e 60%,#ef9422);"></div>
  <svg class="a" style="left:1034px;top:758px;" width="28" height="30">
    <path d="M3.5 3.5 H16 L23.5 11 V27 H3.5 Z" fill="none" stroke="#fcefb0" stroke-width="2.3" stroke-linejoin="round"/>
    <path d="M16 3.5 V11 H23.5" fill="rgba(252,239,176,0.35)" stroke="#fcefb0" stroke-width="1.2"/>
    <rect x="7" y="13" width="12" height="9.5" fill="rgba(252,239,176,0.45)" stroke="#fcefb0" stroke-width="1.2"/>
    <path d="M7 16.2 H19 M7 19.3 H19" stroke="rgba(252,239,176,0.6)" stroke-width="0.8"/>
  </svg>
  <div class="t" style="left:1063px;top:742.5px;font-size:25.5px;letter-spacing:0.35px;color:#1e1a10;line-height:30px;">Parameter
Settings</div>
  <svg class="a" style="left:1256px;top:762px;" width="23" height="23">
    <g transform="translate(11.5 11.5)" fill="#fffae6">
      <circle r="8.3"/>
      <rect x="-2.3" y="-11" width="4.6" height="22" rx="1.2"/>
      <rect x="-2.3" y="-11" width="4.6" height="22" rx="1.2" transform="rotate(45)"/>
      <rect x="-2.3" y="-11" width="4.6" height="22" rx="1.2" transform="rotate(90)"/>
      <rect x="-2.3" y="-11" width="4.6" height="22" rx="1.2" transform="rotate(135)"/>
    </g>
    <circle cx="11.5" cy="11.5" r="3.4" fill="#eeb034"/>
  </svg>
  <div class="t" style="left:1284px;top:759.5px;font-size:26px;color:#1e1a10;">Finish</div>
  <!-- status bar -->
  <div class="a" style="left:0;top:824px;width:1343px;height:4px;background:#fafafa;"></div>
  <div class="a" style="left:0;top:828px;width:1343px;height:24px;background:linear-gradient(#34467c 0,#3f4f8e 2px,#3f4f8e);"></div>
  <div class="a" style="left:138px;top:830px;width:1px;height:22px;background:#5a68a0;"></div>
  <div class="a" style="left:290px;top:830px;width:1px;height:22px;background:#5a68a0;"></div>
  <div class="a" style="left:407px;top:830px;width:1px;height:22px;background:#5a68a0;"></div>
  <div class="t" style="left:-16px;top:838px;font-size:19px;color:#dfe2f0;">COM4   Opened</div>
  <div class="t" style="left:161px;top:838px;font-size:20px;color:#dfe2f0;">Received:  72</div>
  <div class="t" style="left:315px;top:838px;font-size:20px;color:#dfe2f0;">Sent:  36</div>
  <div class="t" style="left:1253px;top:838px;font-size:20px;color:#dfe2f0;">2022/10/18</div>
</div>
</body></html>
